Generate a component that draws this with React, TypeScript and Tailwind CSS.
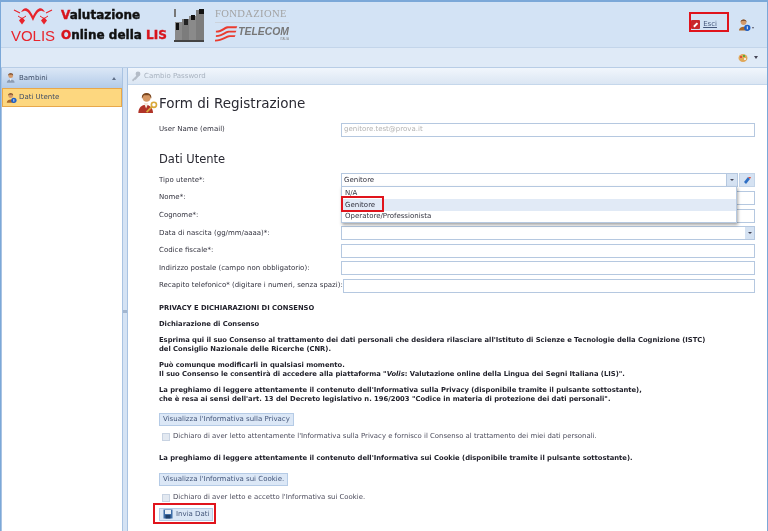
import React from 'react';

const PersonIcon = ({ badge, size = 11 }: { badge?: boolean; size?: number }) => (
    <svg width={size} height={size + 1} viewBox="0 0 14 14">
        <circle cx="6" cy="4" r="3" fill="#d49a6a" />
        <path d="M3 4 C2 0 10 0 9 4 L8 2.5 L4 2.5 Z" fill="#6b3d1e" />
        <path d="M1 13 C1 7.5 11 7.5 11 13 Z" fill={badge ? '#a9682a' : '#8d9db3'} />
        {!badge && <path d="M5 8 L6 11 L7 8 Z" fill="#fff" />}
        {badge && <circle cx="10" cy="10" r="3.4" fill="#1f5fc4" />}
        {badge && <rect x="9.5" y="8.4" width="1" height="3.2" fill="#fff" />}
    </svg>
);

const FieldRow = ({ label, children }: { label: string; children?: React.ReactNode }) => (
    <div className="flex items-center h-[17.6px]">
        <div className="w-[182px] shrink-0 whitespace-nowrap">{label}</div>
        {children ?? <div className="h-[14px] flex-1 bg-white border border-[#b5c8e0]" />}
    </div>
);

const Check = ({ children }: { children: React.ReactNode }) => (
    <div className="flex items-center gap-[3px] h-[10px] pl-[3px] text-[#4a4a5a] text-[6.9px]">
        <div className="w-[8px] h-[8px] bg-[#e3e9f1] border border-[#c8d3e2]" />
        <span className="whitespace-nowrap">{children}</span>
    </div>
);

const Btn = ({ children }: { children: React.ReactNode }) => (
    <div className="h-[13px] w-fit flex items-center px-[3px] bg-[#dbe7f6] border border-[#b5cbe6] text-[#44567a] whitespace-nowrap">
        {children}
    </div>
);

export default function App() {
    return (
        <div className="relative w-[768px] h-[531px] overflow-hidden flex flex-col bg-[#c9dbef] border-t-2 border-x border-[#7ba8d8] text-[#33333f] font-['DejaVu_Sans',sans-serif] text-[7px] leading-[9px] blur-[0.3px]">
            {/* header */}
            <div className="h-[46px] shrink-0 flex items-center justify-between bg-[#d3e3f5] border-b border-[#c3d5ea] pl-[9px] pr-[13px]">
                <div className="flex items-center">
                    <div className="w-[46px] h-[37px] flex flex-col items-center">
                        <svg width="44" height="22" viewBox="0 0 44 22">
                            <path d="M10 6 C13 1 17 0 22 10 C27 0 31 1 34 6 L31 5 C28 4 25 8 22 15 C19 8 16 4 13 5 Z" fill="#e8242c" />
                            <path d="M3 4 L9 7 M41 4 L35 7" stroke="#e8242c" strokeWidth="1.2" />
                            <path d="M11 11 l3 3.5 l-3 4 l-3 -4 Z M33 11 l3 3.5 l-3 4 l-3 -4 Z" fill="#e8242c" />
                            <path d="M7 10 L10 12 M15 10 L12 12 M29 10 L32 12 M37 10 L34 12" stroke="#e8242c" strokeWidth="1" />
                        </svg>
                        <span className="text-[#e8242c] text-[15px] leading-[15px] font-['Liberation_Sans',sans-serif]">VOLIS</span>
                    </div>
                    <div className="ml-[5px] w-[107px] pt-[1px] text-[#111] font-['DejaVu_Sans',sans-serif] font-bold text-[12px] leading-[20px] whitespace-nowrap [-webkit-text-stroke:0.4px_#111]">
                        <div><span className="text-[#d8141c] [-webkit-text-stroke:0.4px_#d8141c]">V</span>alutazione</div>
                        <div><span className="text-[#d8141c] [-webkit-text-stroke:0.4px_#d8141c]">O</span>nline della <span className="text-[#d8141c] [-webkit-text-stroke:0.4px_#d8141c]">LIS</span></div>
                    </div>
                    <svg className="ml-[6px]" width="31" height="34" viewBox="0 0 31 34">
                        <rect x="1" y="14" width="7" height="18" fill="#8a8a8a" />
                        <rect x="8" y="11" width="7" height="21" fill="#7c7c7c" />
                        <rect x="15" y="8" width="7" height="24" fill="#8a8a8a" />
                        <rect x="22" y="2" width="8" height="30" fill="#7c7c7c" />
                        <rect x="2" y="15" width="3" height="7" fill="#111" />
                        <rect x="10" y="11" width="4" height="6" fill="#222" />
                        <rect x="17" y="7" width="4" height="5" fill="#111" />
                        <rect x="25" y="1" width="5" height="5" fill="#111" />
                        <rect x="0" y="1" width="2" height="8" fill="#777" />
                        <rect x="0" y="32" width="30" height="2" fill="#444" />
                    </svg>
                    <div className="ml-[10px] w-[74px]">
                        <div className="font-['Liberation_Serif',serif] text-[#a3a3a3] text-[10.6px] leading-[12px] tracking-[0.35px] pb-[2px] border-b border-[#ccd3dc] whitespace-nowrap">FONDAZIONE</div>
                        <div className="flex items-center mt-[2px]">
                            <svg width="26" height="17" viewBox="0 0 26 18">
                                <path d="M1 6 C8 6 10 1 14 1 L25 1 L24 3 L15 3 C11 3 9 8 1 8 Z M1 11 C8 11 11 6 15 6 L24 6 L23 8 L16 8 C12 8 9 13 1 13 Z M0 16 C8 16 12 11 16 11 L23 11 L22 13 L17 13 C13 13 9 18 0 18 Z" fill="#ea3b2e" />
                            </svg>
                            <div className="flex flex-col items-end">
                                <span className="font-['Liberation_Sans',sans-serif] italic font-bold text-[#777] text-[10.4px] leading-[11px] whitespace-nowrap">TELECOM</span>
                                <span className="font-['Liberation_Sans',sans-serif] text-[#888] text-[3px] leading-[4px]">ITALIA</span>
                            </div>
                        </div>
                    </div>
                </div>
                <div className="flex items-center">
                    <div className="flex items-center gap-[3px]">
                        <div className="w-[9px] h-[9px] rounded-[1px] bg-[#c8272b] flex items-center justify-center">
                            <div className="w-[5px] h-[1.5px] bg-white -rotate-45" />
                        </div>
                        <span className="underline text-[#44567a]">Esci</span>
                    </div>
                    <div className="w-px h-[15px] bg-[#c3d5ea] ml-[11px] mr-[9px]" />
                    <PersonIcon badge size={13} />
                    <div className="ml-[1px] mt-[7px] w-0 h-0 border-x-[1.5px] border-x-transparent border-t-[2px] border-t-[#556]" />
                </div>
            </div>
            {/* toolbar */}
            <div className="h-[20px] shrink-0 flex items-center justify-end gap-[6px] bg-[#dfeaf7] border-b border-[#b8cde6] pr-[9px]">
                <svg width="10" height="10" viewBox="0 0 10 10">
                    <ellipse cx="5" cy="5" rx="4.5" ry="4" fill="#e0a85a" />
                    <circle cx="3" cy="4" r="1" fill="#d33" />
                    <circle cx="6" cy="3" r="1" fill="#3a3" />
                    <circle cx="7" cy="6" r="1" fill="#fff" />
                </svg>
                <div className="w-0 h-0 border-x-[2.5px] border-x-transparent border-t-[3px] border-t-[#445]" />
            </div>
            {/* body */}
            <div className="flex-1 min-h-0 flex">
                <div className="w-[122px] shrink-0 flex flex-col bg-white border-x border-[#a9c3e2]">
                    <div className="h-[20px] flex items-center gap-[2px] pl-[4px] pr-[6px] bg-gradient-to-b from-[#dbe7f6] to-[#b3cbe8] text-[#3e4d66]">
                        <PersonIcon />
                        <span className="flex-1">Bambini</span>
                        <div className="w-0 h-0 border-x-[2.5px] border-x-transparent border-b-[3px] border-b-[#5f6f88]" />
                    </div>
                    <div className="h-[19px] flex items-center gap-[2px] pl-[3px] bg-[#fdd77f] border border-[#e8a84a] text-[#3e4d66]">
                        <PersonIcon badge />
                        <span>Dati Utente</span>
                    </div>
                </div>
                {/* splitter with its grip */}
                <div className="w-[4px] shrink-0 bg-[#d5e3f4] pt-[242px]">
                    <div className="w-[4px] h-[3px] bg-[#a3b6cf]" />
                </div>
                <div className="flex-1 min-w-0 flex flex-col bg-white border-l border-[#a9c3e2]">
                    <div className="h-[17px] shrink-0 flex items-center gap-[3px] pl-[3px] bg-gradient-to-b from-[#f1f6fc] to-[#dbe6f3] border-b border-[#c5d7eb] text-[#a8b2bf]">
                        <svg width="10" height="11" viewBox="0 0 10 11">
                            <circle cx="7" cy="3" r="2.4" fill="#b4bcc7" />
                            <path d="M6 4 L1 9 L2 10.5 L4 8.5 L4.5 9 L8 5 Z" fill="#b4bcc7" />
                        </svg>
                        <span>Cambio Password</span>
                    </div>
                    <div className="flex-1 min-h-0 pl-[31px] pr-[12px] relative">
                        <div className="absolute left-[9px] top-[7px]">
                            <svg width="21" height="22" viewBox="0 0 22 24">
                                <circle cx="10" cy="6" r="4.6" fill="#d69763" />
                                <path d="M5 7 C3 -1 17 -1 15 7 L13 3.5 L7 3.5 Z" fill="#7a4720" />
                                <path d="M1 23 C1 11 17 11 17 23 Z" fill="#b03328" />
                                <path d="M7 12 L9.5 18 L12 12 Z" fill="#f4e9dc" />
                                <circle cx="18" cy="14" r="2.8" fill="none" stroke="#d9a93a" strokeWidth="1.8" />
                                <path d="M16 16 L10 22" stroke="#d9a93a" strokeWidth="1.8" />
                            </svg>
                        </div>
                        <div className="h-[36px] pt-[9px] font-['DejaVu_Sans',sans-serif] text-[13.5px] leading-[18px] text-[#2a2a33] whitespace-nowrap">Form di Registrazione</div>
                        <FieldRow label="User Name (email)">
                            <div className="h-[14px] flex-1 flex items-center pl-[2px] bg-white border border-[#b5c8e0] text-[#b3b3b3]">genitore.test@prova.it</div>
                        </FieldRow>
                        <div className="h-[32px] pt-[12px] font-['DejaVu_Sans',sans-serif] text-[11.5px] leading-[16px] text-[#2a2a33]">Dati Utente</div>
                        <div className="mt-[1px]">
                            <FieldRow label="Tipo utente*:">
                                <div className="h-[14px] flex-1 flex items-center bg-white border border-[#b5c8e0]">
                                    <span className="flex-1 pl-[2px]">Genitore</span>
                                    <div className="w-[11px] h-full flex items-center justify-center bg-[#d5e2f2] border-l border-[#b5c8e0]">
                                        <div className="w-0 h-0 border-x-[2px] border-x-transparent border-t-[2.5px] border-t-[#445]" />
                                    </div>
                                </div>
                                <div className="ml-[1px] w-[16px] h-[14px] flex items-center justify-center bg-[#d5e2f2] border border-[#c3d4e8]">
                                    <svg width="9" height="9" viewBox="0 0 9 9">
                                        <path d="M1 6 L5 1 L7 3 L3 8 Z" fill="#2f6fc4" />
                                        <path d="M5 1 L8 1 L7 3 Z" fill="#e2503a" />
                                    </svg>
                                </div>
                            </FieldRow>
                            <FieldRow label="Nome*:" />
                            <FieldRow label="Cognome*:" />
                            <FieldRow label="Data di nascita (gg/mm/aaaa)*:">
                                <div className="h-[14px] flex-1 flex justify-end bg-white border border-[#b5c8e0]">
                                    <div className="w-[9px] h-full flex items-center justify-center bg-[#d5e2f2]">
                                        <div className="w-0 h-0 border-x-[2px] border-x-transparent border-t-[2.5px] border-t-[#445]" />
                                    </div>
                                </div>
                            </FieldRow>
                            <FieldRow label="Codice fiscale*:" />
                            <FieldRow label="Indirizzo postale (campo non obbligatorio):" />
                            <div className="flex items-center h-[17.6px]">
                                <div className="w-[184px] shrink-0 whitespace-nowrap">Recapito telefonico* (digitare i numeri, senza spazi):</div>
                                <div className="h-[14px] flex-1 bg-white border border-[#b5c8e0]" />
                            </div>
                        </div>
                        <div className="mt-[9px] font-bold text-[#22222c] text-[6.77px] leading-[9px]">
                            <p className="mb-[7px]">PRIVACY E DICHIARAZIONI DI CONSENSO</p>
                            <p className="mb-[7px]">Dichiarazione di Consenso</p>
                            <p className="mb-[7px]">Esprima qui il suo Consenso al trattamento dei dati personali che desidera rilasciare all'Istituto di Scienze e Tecnologie della Cognizione (ISTC)<br />del Consiglio Nazionale delle Ricerche (CNR).</p>
                            <p className="mb-[7px]">Può comunque modificarli in qualsiasi momento.<br />Il suo Consenso le consentirà di accedere alla piattaforma "<i>Volis</i>: Valutazione online della Lingua dei Segni Italiana (LIS)".</p>
                            <p>La preghiamo di leggere attentamente il contenuto dell'Informativa sulla Privacy (disponibile tramite il pulsante sottostante),<br />che è resa ai sensi dell'art. 13 del Decreto legislativo n. 196/2003 "Codice in materia di protezione dei dati personali".</p>
                        </div>
                        <div className="mt-[9px]"><Btn>Visualizza l'Informativa sulla Privacy</Btn></div>
                        <div className="mt-[6px]"><Check>Dichiaro di aver letto attentamente l'Informativa sulla Privacy e fornisco il Consenso al trattamento dei miei dati personali.</Check></div>
                        <p className="mt-[12px] font-bold text-[#22222c] text-[6.77px]">La preghiamo di leggere attentamente il contenuto dell'Informativa sui Cookie (disponibile tramite il pulsante sottostante).</p>
                        <div className="mt-[10px]"><Btn>Visualizza l'Informativa sui Cookie.</Btn></div>
                        <div className="mt-[7px]"><Check>Dichiaro di aver letto e accetto l'Informativa sui Cookie.</Check></div>
                        <div className="mt-[5px]">
                            <Btn>
                                <svg className="mr-[3px]" width="10" height="10" viewBox="0 0 10 10">
                                    <rect x="0.5" y="0.5" width="9" height="9" fill="#3f6ea8" />
                                    <rect x="2" y="1" width="6" height="4" fill="#e8eef6" />
                                    <rect x="2.5" y="6" width="5" height="3.5" fill="#1f3f6a" />
                                </svg>
                                Invia Dati
                            </Btn>
                        </div>
                    </div>
                </div>
            </div>
            {/* dropdown open over the form */}
            <div className="absolute left-[340px] top-[184px] w-[396px] h-[37px] bg-white border border-[#b5c8e0] shadow-[1px_2px_3px_rgba(0,0,0,0.35)] flex flex-col pt-[1px]">
                <div className="h-[11px] shrink-0 flex items-center pl-[3px]">N/A</div>
                <div className="h-[12px] shrink-0 flex items-center pl-[3px] bg-[#e1eaf6]">Genitore</div>
                <div className="h-[11px] shrink-0 flex items-center pl-[3px]">Operatore/Professionista</div>
            </div>
            {/* red annotations */}
            <div className="absolute left-[340px] top-[194px] w-[43px] h-[16px] border-2 border-[#e0141c]" />
            <div className="absolute left-[688px] top-[10px] w-[40px] h-[20px] border-2 border-[#e0141c]" />
            <div className="absolute left-[152px] top-[501px] w-[63px] h-[21px] border-2 border-[#e0141c]" />
        </div>
    );
}
